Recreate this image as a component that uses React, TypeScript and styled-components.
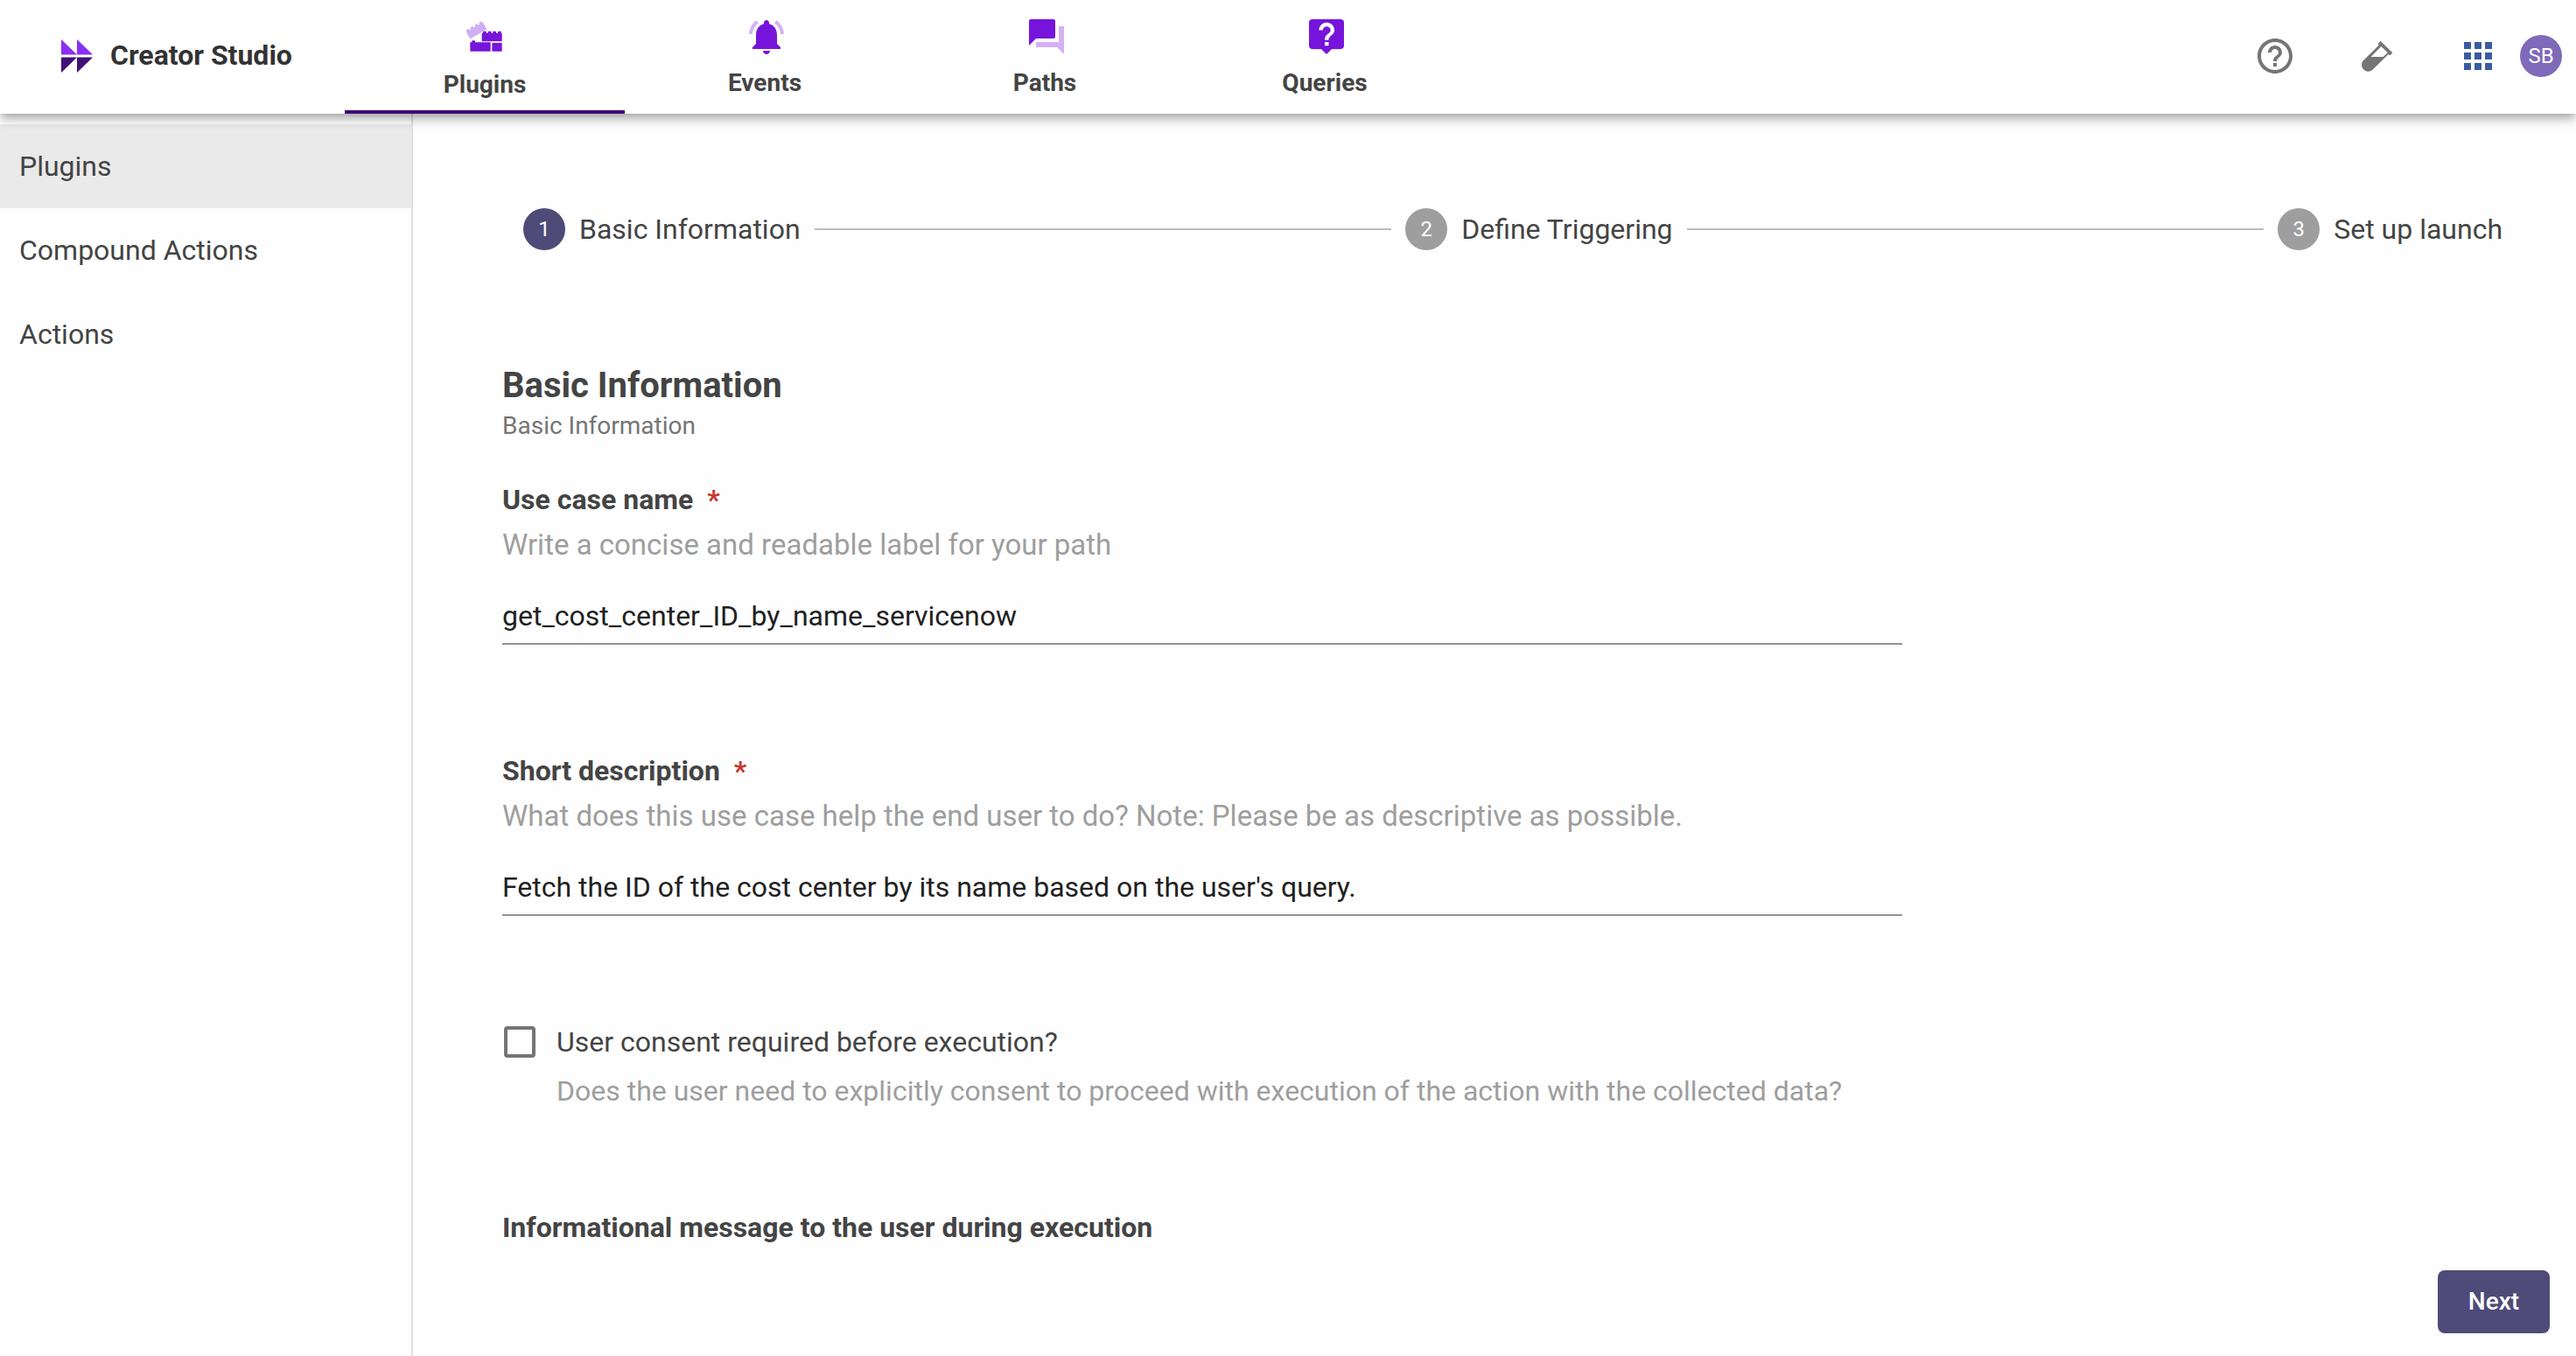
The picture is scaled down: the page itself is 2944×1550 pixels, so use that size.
import React, { useState } from 'react';
import styled, { createGlobalStyle } from 'styled-components';

const GlobalStyle = createGlobalStyle`
  *, *::before, *::after { box-sizing: border-box; }
  body {
    margin: 0;
    background: #fefefe;
    color: #444444;
    font-family: Roboto, "Liberation Sans", sans-serif;
    font-size: 32px;
    line-height: 40px;
  }
  h1, h2, p { margin: 0; }
  button { font-family: inherit; border: 0; cursor: pointer; }
`;

const Page = styled.div`
  display: flex;
  flex-direction: column;
  min-height: 100vh;
`;

const Header = styled.header`
  display: flex;
  position: relative;
  z-index: 1;
  height: 130px;
  background: #ffffff;
  box-shadow: 0 4px 8px -2px rgba(0, 0, 0, 0.2), 0 8px 10px rgba(0, 0, 0, 0.14),
    0 2px 20px rgba(0, 0, 0, 0.12);
`;

const Brand = styled.a`
  display: flex;
  align-items: center;
  gap: 20px;
  width: 394px;
  padding: 0 0 4px 70px;
  color: #333333;
  font-weight: 700;
  text-decoration: none;
`;

const Tabs = styled.nav`
  display: flex;
  flex: 1;
`;

const Tab = styled.a<{ $active?: boolean }>`
  display: flex;
  flex-direction: column;
  align-items: center;
  gap: 10px;
  width: 320px;
  padding-top: 18px;
  border-bottom: 4px solid ${(p) => (p.$active ? '#3f0a7a' : 'transparent')};
  color: #444444;
  font-size: 28px;
  font-weight: 700;
  line-height: 38px;
  text-decoration: none;
`;

const Actions = styled.div`
  display: flex;
  align-items: center;
  gap: 68px;
  padding: 0 16px 2px 0;
`;

const Account = styled.div`
  display: flex;
  gap: 24px;
`;

const IconButton = styled.button`
  display: flex;
  width: 48px;
  height: 48px;
  padding: 0;
  background: none;
`;

const Avatar = styled.button`
  width: 48px;
  height: 48px;
  padding: 0;
  border-radius: 50%;
  background: #7f69b9;
  color: #ffffff;
  font-size: 24px;
`;

const Body = styled.div`
  display: flex;
  flex: 1;
`;

const Sidebar = styled.nav`
  flex: 0 0 472px;
  padding-top: 12px;
  border-right: 2px solid #e0e0e0;
`;

const SideLink = styled.a<{ $active?: boolean }>`
  display: block;
  padding: 28px 22px;
  background: ${(p) => (p.$active ? '#eaeaea' : 'transparent')};
  color: #444444;
  text-decoration: none;
`;

const Main = styled.main`
  display: flex;
  flex: 1;
  flex-direction: column;
  min-width: 0;
`;

const Stepper = styled.ol`
  display: flex;
  align-items: center;
  margin: 0;
  padding: 108px 68px 131px 110px;
  list-style: none;
`;

const Step = styled.li`
  display: flex;
  align-items: center;
  gap: 16px;
  padding: 0 16px;
`;

const StepNumber = styled.span<{ $active?: boolean }>`
  width: 48px;
  border-radius: 50%;
  background: ${(p) => (p.$active ? '#4e4b79' : '#9e9e9e')};
  color: #ffffff;
  font-size: 24px;
  line-height: 48px;
  text-align: center;
`;

const Connector = styled.li`
  flex: 1;
  border-top: 2px solid #bdbdbd;
`;

const Form = styled.form`
  flex: 1;
  width: 100%;
  max-width: 1702px;
  padding-left: 102px;
`;

const Title = styled.h1`
  font-size: 40px;
  font-weight: 700;
  line-height: 48px;
`;

const Subtitle = styled.p`
  padding: 2px 0 44px;
  color: #757575;
  font-size: 28px;
`;

const Field = styled.div`
  display: flex;
  flex-direction: column;
  margin-bottom: 124px;
`;

const FieldLabel = styled.label`
  display: flex;
  gap: 16px;
  font-weight: 700;
`;

const SectionLabel = styled.h2`
  font-size: 32px;
  font-weight: 700;
`;

const Required = styled.span`
  color: #c8372d;
`;

const Hint = styled.p`
  padding-top: 12px;
  color: #9e9e9e;
  font-size: 33px;
`;

const TextInput = styled.input`
  height: 64px;
  margin-top: 30px;
  padding: 0;
  border: 0;
  border-bottom: 2px solid #949494;
  border-radius: 0;
  outline: 0;
  background: transparent;
  color: #212121;
  font: inherit;
`;

const CheckField = styled.div`
  display: grid;
  grid-template-columns: 36px 1fr;
  align-items: center;
  gap: 16px 24px;
  margin-bottom: 116px;
  padding-left: 2px;
`;

const Checkbox = styled.input`
  width: 36px;
  height: 36px;
  margin: 0;
  appearance: none;
  border: 4px solid #757575;
  border-radius: 4px;

  &:checked {
    border-color: #4e4b79;
    background: #4e4b79;
  }
`;

const CheckHint = styled.p`
  grid-column: 2;
  color: #9e9e9e;
`;

const Footer = styled.footer`
  display: flex;
  justify-content: flex-end;
  padding: 0 30px 26px;
`;

const NextButton = styled.button`
  min-width: 128px;
  padding: 16px 24px;
  border-radius: 8px;
  background: #4e4b79;
  color: #ffffff;
  font-size: 28px;
  font-weight: 500;
  line-height: 40px;
`;

const PURPLE = '#7614dc';
const LILAC = '#d4b2f4';

const Logo = () => (
  <svg width="36" height="40" viewBox="0 -2 36 40" aria-hidden="true">
    <path d="M0 0l18 17.500H0zM18 0l18 17.500H18z" fill="#8a2ff5" />
    <path d="M0 20.500h18L0 38zM18 20.500h18L18 38z" fill="#3f1175" />
  </svg>
);

const Studs = ({ x, y, count }: { x: number; y: number; count: number }) => (
  <>
    {Array.from({ length: count }, (_, i) => (
      <rect key={i} x={x + i * 17} y={y} width="11" height="9" rx="2" />
    ))}
  </>
);

const BricksIcon = () => (
  <svg width="50" height="50" viewBox="57 24 150 150" fill={PURPLE} aria-hidden="true">
    <g transform="translate(82 103) rotate(-30)" fill="#cfaef2">
      <rect y="-27" width="66" height="27" rx="1" />
      <Studs x={2} y={-33} count={4} />
    </g>
    <rect x="122" y="83" width="69" height="29" rx="1" />
    <Studs x={126} y={77} count={4} />
    <rect x="82" y="115" width="70" height="31" rx="1" />
    <Studs x={88} y={109} count={1} />
    <rect x="157" y="117" width="34" height="29" rx="1" />
  </svg>
);

const BellIcon = () => (
  <svg width="48" height="48" viewBox="-1 0 24 24" overflow="visible" fill={PURPLE} aria-hidden="true">
    <path d="M18 16v-5c0-3.070-1.640-5.640-4.500-6.320V4c0-.83-.67-1.500-1.500-1.500s-1.500.67-1.500 1.500v.68C7.630 5.360 6 7.920 6 11v5l-2 2v1h16v-1l-2-2zM12 22c1.100 0 2-.9 2-2h-4c0 1.100.89 2 2 2z" />
    <path
      fill={LILAC}
      d="M7.580 4.080L6.150 2.650C3.750 4.480 2.170 7.300 2.030 10.500h2c.15-2.650 1.510-4.970 3.550-6.420zM19.970 10.500h2c-.15-3.200-1.730-6.020-4.120-7.850l-1.420 1.430c2.020 1.450 3.390 3.770 3.540 6.420z"
    />
  </svg>
);

const ForumIcon = () => (
  <svg width="48" height="48" viewBox="-1 0 24 24" overflow="visible" fill={PURPLE} aria-hidden="true">
    <path fill={LILAC} d="M19 6h3v16l-4-4H6v-3h13z" />
    <path d="M3 2h13a1 1 0 0 1 1 1v9a1 1 0 0 1-1 1H6l-4 4V3a1 1 0 0 1 1-1z" />
  </svg>
);

const QueryIcon = () => (
  <svg width="48" height="48" viewBox="-1 0 24 24" overflow="visible" fill={PURPLE} aria-hidden="true">
    <path fill={LILAC} d="M3 18h18l-1 1.300H4z" />
    <path d="M4 2h16a2 2 0 0 1 2 2v13a2 2 0 0 1-2 2h-5l-3 3-3-3H4a2 2 0 0 1-2-2V4a2 2 0 0 1 2-2z" />
    <path
      fill="#ffffff"
      transform="translate(-1.200 -2.800) scale(1.110)"
      d="M11 18h2v-2h-2zM12 6c-2.210 0-4 1.790-4 4h2c0-1.100.9-2 2-2s2 .9 2 2c0 2-3 1.750-3 5h2c0-2.250 3-2.500 3-5 0-2.210-1.790-4-4-4z"
    />
  </svg>
);

const HelpIcon = () => (
  <svg width="48" height="48" viewBox="0 0 24 24" fill="#757575" aria-hidden="true">
    <path d="M11 18h2v-2h-2v2zm1-16C6.480 2 2 6.480 2 12s4.480 10 10 10 10-4.480 10-10S17.520 2 12 2zm0 18c-4.410 0-8-3.590-8-8s3.590-8 8-8 8 3.590 8 8-3.590 8-8 8zm0-14c-2.210 0-4 1.790-4 4h2c0-1.100.9-2 2-2s2 .9 2 2c0 2-3 1.750-3 5h2c0-2.250 3-2.500 3-5 0-2.210-1.790-4-4-4z" />
  </svg>
);

const TubeIcon = () => (
  <svg width="48" height="48" viewBox="576 120 144 144" fill="#757575" aria-hidden="true">
    <path
      fillRule="evenodd"
      d="M662 141L703 181L695 190L688 187L633 241A23 23 0 0 1 601 209L656 155L653 151ZM664 159L686 181L671 195H629Z"
    />
  </svg>
);

const AppsIcon = () => (
  <svg width="48" height="48" viewBox="0 0 48 48" fill="#3a5ba0" aria-hidden="true">
    {[8, 20, 32].map((y) =>
      [8, 20, 32].map((x) => <rect key={`${x}-${y}`} x={x} y={y} width="8" height="8" />)
    )}
  </svg>
);

const tabs = [
  { label: 'Plugins', Icon: BricksIcon },
  { label: 'Events', Icon: BellIcon },
  { label: 'Paths', Icon: ForumIcon },
  { label: 'Queries', Icon: QueryIcon },
];

const sections = ['Plugins', 'Compound Actions', 'Actions'];
const steps = ['Basic Information', 'Define Triggering', 'Set up launch'];

type TextFieldProps = { id: string; label: string; hint: string; initial: string };

const TextField = ({ id, label, hint, initial }: TextFieldProps) => {
  const [value, setValue] = useState(initial);
  return (
    <Field>
      <FieldLabel htmlFor={id}>
        {label}
        <Required>*</Required>
      </FieldLabel>
      <Hint id={`${id}-hint`}>{hint}</Hint>
      <TextInput
        id={id}
        type="text"
        required
        aria-describedby={`${id}-hint`}
        value={value}
        onChange={(e) => setValue(e.target.value)}
      />
    </Field>
  );
};

export default function App() {
  return (
    <Page>
      <GlobalStyle />
      <Header>
        <Brand href="#">
          <Logo />
          Creator Studio
        </Brand>
        <Tabs aria-label="Studio">
          {tabs.map(({ label, Icon }, i) => (
            <Tab key={label} href="#" $active={i === 0} aria-current={i === 0 ? 'page' : undefined}>
              <Icon />
              {label}
            </Tab>
          ))}
        </Tabs>
        <Actions>
          <IconButton type="button" aria-label="Help">
            <HelpIcon />
          </IconButton>
          <IconButton type="button" aria-label="Labs">
            <TubeIcon />
          </IconButton>
          <Account>
            <IconButton type="button" aria-label="Apps">
              <AppsIcon />
            </IconButton>
            <Avatar type="button">SB</Avatar>
          </Account>
        </Actions>
      </Header>
      <Body>
        <Sidebar aria-label="Sections">
          {sections.map((name, i) => (
            <SideLink key={name} href="#" $active={i === 0}>
              {name}
            </SideLink>
          ))}
        </Sidebar>
        <Main>
          <Stepper>
            {steps.map((name, i) => (
              <React.Fragment key={name}>
                {i > 0 && <Connector aria-hidden="true" />}
                <Step aria-current={i === 0 ? 'step' : undefined}>
                  <StepNumber $active={i === 0}>{i + 1}</StepNumber>
                  {name}
                </Step>
              </React.Fragment>
            ))}
          </Stepper>
          <Form id="plugin-form" onSubmit={(e) => e.preventDefault()}>
            <Title>Basic Information</Title>
            <Subtitle>Basic Information</Subtitle>
            <TextField
              id="use-case-name"
              label="Use case name"
              hint="Write a concise and readable label for your path"
              initial="get_cost_center_ID_by_name_servicenow"
            />
            <TextField
              id="short-description"
              label="Short description"
              hint="What does this use case help the end user to do? Note: Please be as descriptive as possible."
              initial="Fetch the ID of the cost center by its name based on the user's query."
            />
            <CheckField>
              <Checkbox id="consent" type="checkbox" aria-describedby="consent-hint" />
              <label htmlFor="consent">User consent required before execution?</label>
              <CheckHint id="consent-hint">
                Does the user need to explicitly consent to proceed with execution of the action with the collected data?
              </CheckHint>
            </CheckField>
            <SectionLabel>Informational message to the user during execution</SectionLabel>
          </Form>
          <Footer>
            <NextButton type="submit" form="plugin-form">
              Next
            </NextButton>
          </Footer>
        </Main>
      </Body>
    </Page>
  );
}
